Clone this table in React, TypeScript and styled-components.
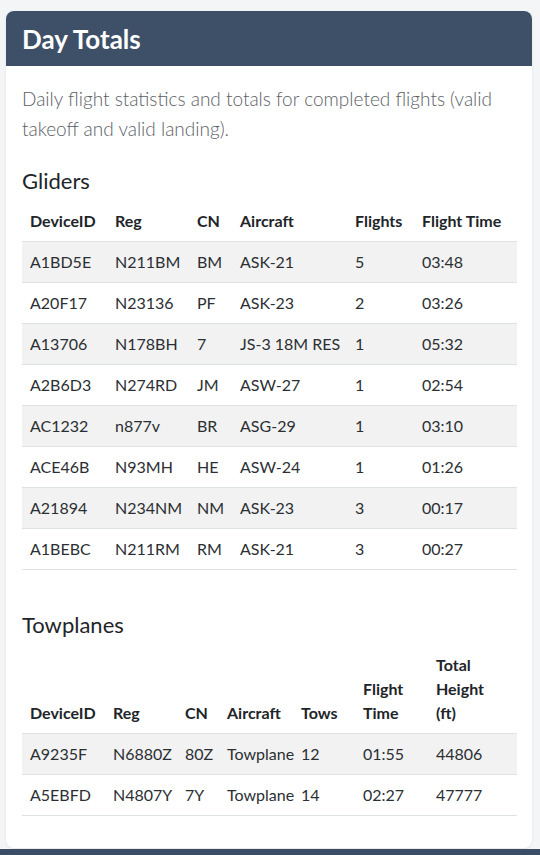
import React from "react";
import styled, { createGlobalStyle } from "styled-components";

interface Column {
  label: string;
  width: number;
  stacked?: boolean;
}

const gliderColumns: Column[] = [
  { label: "DeviceID", width: 85 },
  { label: "Reg", width: 82 },
  { label: "CN", width: 43 },
  { label: "Aircraft", width: 115 },
  { label: "Flights", width: 67 },
  { label: "Flight Time", width: 103 },
];

const gliders: string[][] = [
  ["A1BD5E", "N211BM", "BM", "ASK-21", "5", "03:48"],
  ["A20F17", "N23136", "PF", "ASK-23", "2", "03:26"],
  ["A13706", "N178BH", "7", "JS-3 18M RES", "1", "05:32"],
  ["A2B6D3", "N274RD", "JM", "ASW-27", "1", "02:54"],
  ["AC1232", "n877v", "BR", "ASG-29", "1", "03:10"],
  ["ACE46B", "N93MH", "HE", "ASW-24", "1", "01:26"],
  ["A21894", "N234NM", "NM", "ASK-23", "3", "00:17"],
  ["A1BEBC", "N211RM", "RM", "ASK-21", "3", "00:27"],
];

const towColumns: Column[] = [
  { label: "DeviceID", width: 83 },
  { label: "Reg", width: 72 },
  { label: "CN", width: 42 },
  { label: "Aircraft", width: 74 },
  { label: "Tows", width: 62 },
  { label: "Flight Time", width: 73, stacked: true },
  { label: "Total Height (ft)", width: 89, stacked: true },
];

const towplanes: string[][] = [
  ["A9235F", "N6880Z", "80Z", "Towplane", "12", "01:55", "44806"],
  ["A5EBFD", "N4807Y", "7Y", "Towplane", "14", "02:27", "47777"],
];

function StatsTable({ columns, rows }: { columns: Column[]; rows: string[][] }) {
  return (
    <Table>
      <colgroup>
        {columns.map((c) => (
          <col key={c.label} style={{ width: c.width }} />
        ))}
      </colgroup>
      <thead>
        <tr>
          {columns.map((c) => (
            <Th key={c.label}>
              <Label $stacked={c.stacked}>{c.label}</Label>
            </Th>
          ))}
        </tr>
      </thead>
      <tbody>
        {rows.map((row, i) => (
          <Row key={row[0]} $striped={i % 2 === 0}>
            {row.map((cell, j) => (
              <Td key={j}>{cell}</Td>
            ))}
          </Row>
        ))}
      </tbody>
    </Table>
  );
}

export default function App() {
  return (
    <>
      <GlobalStyle />
      <Page>
        <Card>
          <CardHeader>
            <Title>Day Totals</Title>
          </CardHeader>
          <CardBody>
            <Lead>
              Daily flight statistics and totals for completed flights (valid
              takeoff and valid landing).
            </Lead>
            <SectionTitle>Gliders</SectionTitle>
            <StatsTable columns={gliderColumns} rows={gliders} />
            <SectionTitle $spaced>Towplanes</SectionTitle>
            <StatsTable columns={towColumns} rows={towplanes} />
          </CardBody>
        </Card>
        <NextBar />
      </Page>
    </>
  );
}

const GlobalStyle = createGlobalStyle`
  body {
    margin: 0;
    background: #f3f5f7;
    font-family: Lato, "Noto Sans", sans-serif;
    color: #212529;
  }
`;

const Page = styled.div`
  padding: 11px 8px 0 6px;
  height: 855px;
  box-sizing: border-box;
  overflow: hidden;
`;

const Card = styled.section`
  background: #fff;
  border-radius: 8px;
  box-shadow: 0 1px 3px rgba(0, 0, 0, 0.08);
  overflow: hidden;
`;

const CardHeader = styled.header`
  height: 55px;
  background: #3d5068;
  display: flex;
  align-items: center;
  padding: 0 16px;
`;

const Title = styled.h1`
  margin: 0;
  color: #fff;
  font-size: 26px;
  font-weight: 700;
`;

const CardBody = styled.div`
  padding: 18px 15px 16px 16px;
`;

const Lead = styled.p`
  margin: 0 0 24px;
  font-size: 19px;
  font-weight: 300;
  line-height: 30px;
  color: #5b6066;
`;

const SectionTitle = styled.h2<{ $spaced?: boolean }>`
  margin: ${({ $spaced }) => ($spaced ? "42px" : "0")} 0 7px;
  font-size: 22px;
  font-weight: 400;
  line-height: 26px;
  color: #212529;
`;

const Table = styled.table`
  width: 100%;
  margin-bottom: 16px;
  table-layout: fixed;
  border-collapse: collapse;
  font-size: 16px;
  line-height: 24px;
`;

const Th = styled.th`
  text-align: left;
  vertical-align: bottom;
  font-weight: 700;
  padding: 8px;
  border-bottom: 1px solid #dee2e6;
`;

const Label = styled.span<{ $stacked?: boolean }>`
  display: inline-block;
  width: ${({ $stacked }) => ($stacked ? "min-content" : "auto")};
  white-space: ${({ $stacked }) => ($stacked ? "normal" : "nowrap")};
`;

const Row = styled.tr<{ $striped: boolean }>`
  background: ${({ $striped }) => ($striped ? "#f2f2f2" : "#fff")};
`;

const Td = styled.td`
  padding: 8px;
  border-bottom: 1px solid #dee2e6;
  color: #2b2f33;
  white-space: nowrap;
`;

const NextBar = styled.div`
  margin-top: 1px;
  margin-left: -6px;
  margin-right: -8px;
  height: 20px;
  background: #3a4c66;
`;
